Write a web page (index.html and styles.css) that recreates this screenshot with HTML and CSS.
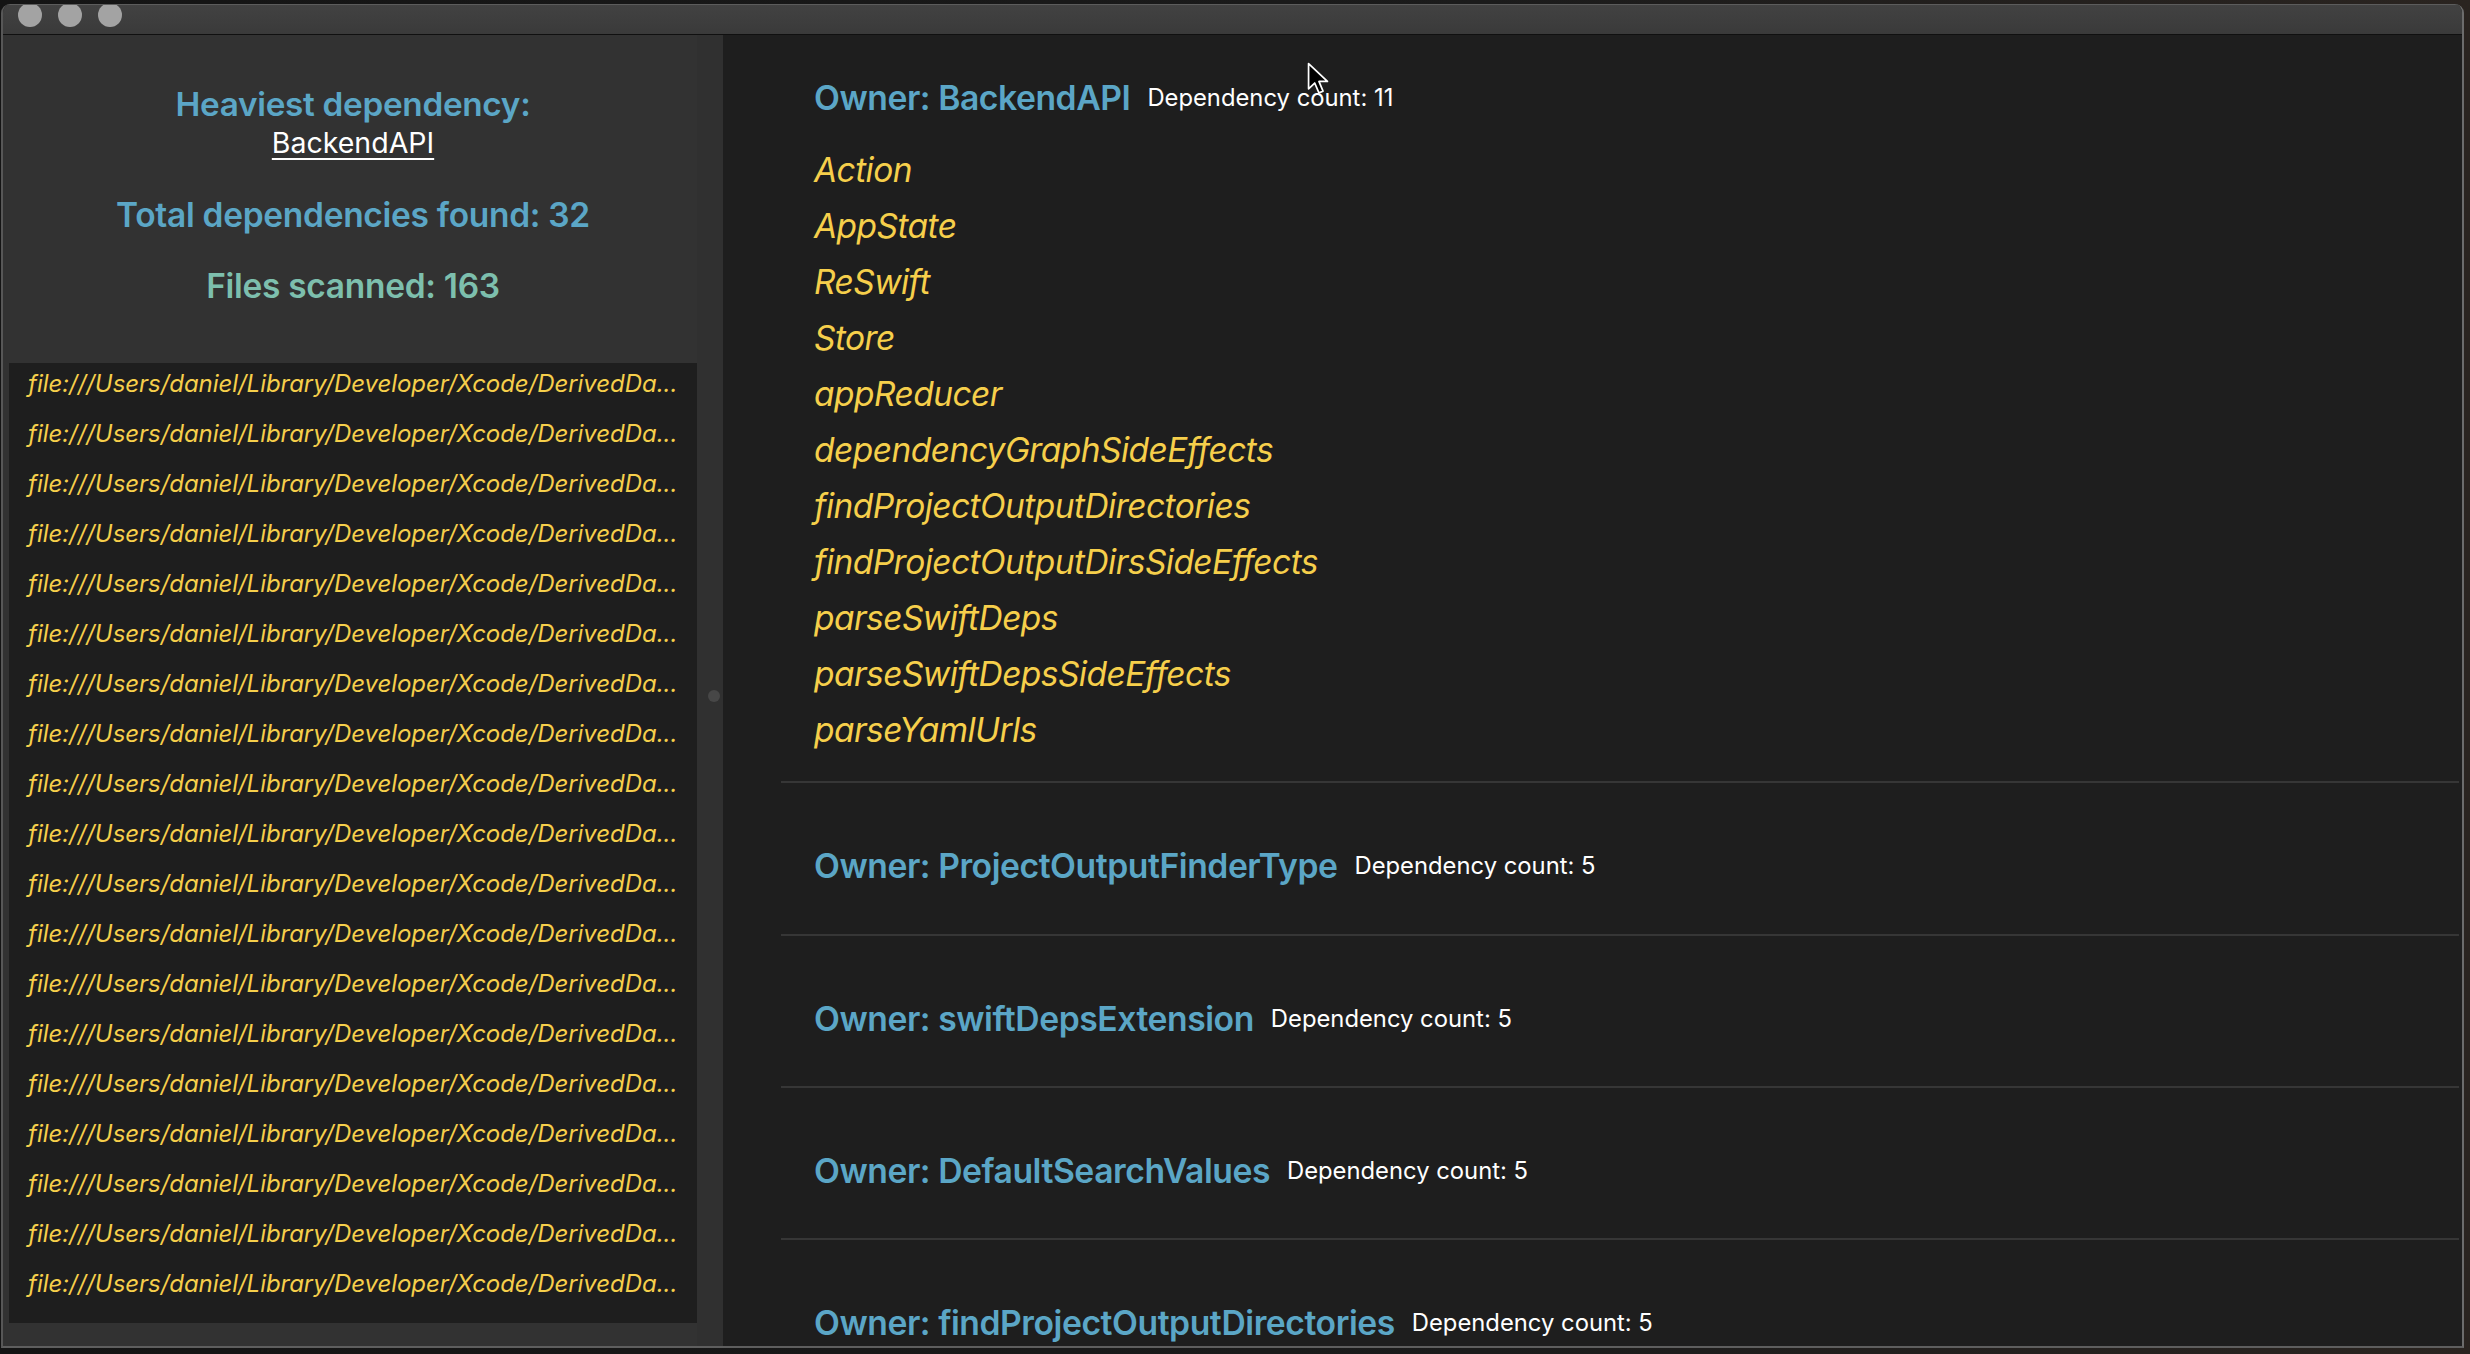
FILE: index.html
```html
<!DOCTYPE html>
<html lang="en">
<head>
<meta charset="utf-8">
<title>Dependency Viewer</title>
<link rel="stylesheet" href="styles.css">
</head>
<body>
<div class="desktop">
  <div class="window">
    <div class="titlebar">
      <span class="light"></span>
      <span class="light"></span>
      <span class="light"></span>
    </div>
    <div class="content">
      <aside class="sidebar">
        <div class="stats">
          <div class="stat-title">Heaviest dependency:</div>
          <div class="stat-link">BackendAPI</div>
          <div class="stat-total">Total dependencies found: 32</div>
          <div class="stat-files">Files scanned: 163</div>
        </div>
        <div class="file-list">
          <div class="file-row">file:///Users/daniel/Library/Developer/Xcode/DerivedDa...</div>
          <div class="file-row">file:///Users/daniel/Library/Developer/Xcode/DerivedDa...</div>
          <div class="file-row">file:///Users/daniel/Library/Developer/Xcode/DerivedDa...</div>
          <div class="file-row">file:///Users/daniel/Library/Developer/Xcode/DerivedDa...</div>
          <div class="file-row">file:///Users/daniel/Library/Developer/Xcode/DerivedDa...</div>
          <div class="file-row">file:///Users/daniel/Library/Developer/Xcode/DerivedDa...</div>
          <div class="file-row">file:///Users/daniel/Library/Developer/Xcode/DerivedDa...</div>
          <div class="file-row">file:///Users/daniel/Library/Developer/Xcode/DerivedDa...</div>
          <div class="file-row">file:///Users/daniel/Library/Developer/Xcode/DerivedDa...</div>
          <div class="file-row">file:///Users/daniel/Library/Developer/Xcode/DerivedDa...</div>
          <div class="file-row">file:///Users/daniel/Library/Developer/Xcode/DerivedDa...</div>
          <div class="file-row">file:///Users/daniel/Library/Developer/Xcode/DerivedDa...</div>
          <div class="file-row">file:///Users/daniel/Library/Developer/Xcode/DerivedDa...</div>
          <div class="file-row">file:///Users/daniel/Library/Developer/Xcode/DerivedDa...</div>
          <div class="file-row">file:///Users/daniel/Library/Developer/Xcode/DerivedDa...</div>
          <div class="file-row">file:///Users/daniel/Library/Developer/Xcode/DerivedDa...</div>
          <div class="file-row">file:///Users/daniel/Library/Developer/Xcode/DerivedDa...</div>
          <div class="file-row">file:///Users/daniel/Library/Developer/Xcode/DerivedDa...</div>
          <div class="file-row">file:///Users/daniel/Library/Developer/Xcode/DerivedDa...</div>
          <div class="file-row file-row-partial">file:///Users/daniel/Library/Developer/Xcode/DerivedDa...</div>
        </div>
      </aside>
      <div class="divider"><span class="handle"></span></div>
      <main class="main">
        <section class="owner">
          <div class="owner-head">
            <span class="owner-name">Owner: BackendAPI</span>
            <span class="owner-count">Dependency count: 11</span>
          </div>
          <ul class="deps">
            <li>Action</li>
            <li>AppState</li>
            <li>ReSwift</li>
            <li>Store</li>
            <li>appReducer</li>
            <li>dependencyGraphSideEffects</li>
            <li>findProjectOutputDirectories</li>
            <li>findProjectOutputDirsSideEffects</li>
            <li>parseSwiftDeps</li>
            <li>parseSwiftDepsSideEffects</li>
            <li>parseYamlUrls</li>
          </ul>
        </section>
        <section class="owner">
          <div class="owner-head">
            <span class="owner-name">Owner: ProjectOutputFinderType</span>
            <span class="owner-count">Dependency count: 5</span>
          </div>
          <ul class="deps"></ul>
        </section>
        <section class="owner">
          <div class="owner-head">
            <span class="owner-name">Owner: swiftDepsExtension</span>
            <span class="owner-count">Dependency count: 5</span>
          </div>
          <ul class="deps"></ul>
        </section>
        <section class="owner">
          <div class="owner-head">
            <span class="owner-name">Owner: DefaultSearchValues</span>
            <span class="owner-count">Dependency count: 5</span>
          </div>
          <ul class="deps"></ul>
        </section>
        <section class="owner">
          <div class="owner-head">
            <span class="owner-name">Owner: findProjectOutputDirectories</span>
            <span class="owner-count">Dependency count: 5</span>
          </div>
          <ul class="deps"></ul>
        </section>
      </main>
    </div>
  </div>
  <svg class="cursor" width="22" height="34" viewBox="-1 -1 14 21.5">
    <path d="M0 0 V16 L3.9 12.3 L6.6 18.6 L9.2 17.5 L6.6 11.3 H12 Z" fill="#000" stroke="#fff" stroke-width="1.1" stroke-linejoin="round"/>
  </svg>
</div>
</body>
</html>
```

FILE: styles.css
```css
* { box-sizing: border-box; }

html, body {
  margin: 0;
  padding: 0;
}

body {
  width: 2470px;
  height: 1354px;
  overflow: hidden;
  background: #121212;
  font-family: Inter, "Noto Sans", "Liberation Sans", sans-serif;
}

.desktop {
  position: relative;
  width: 2470px;
  height: 1354px;
  padding: 4px 0 0 1px;
  background: linear-gradient(90deg, #141414 0%, #1b1b1b 60%, #2a2420 100%);
}

.window {
  width: 2463px;
  height: 1344px;
  display: flex;
  flex-direction: column;
  border-left: 2px solid #575757;
  border-right: 2px solid #6c6c6c;
  border-bottom: 2px solid #5e5e5e;
  border-radius: 9px 9px 0 0;
  overflow: hidden;
  background: #1e1e1e;
}

.titlebar {
  height: 31px;
  flex: none;
  display: flex;
  align-items: flex-start;
  gap: 16px;
  padding-left: 15px;
  background: linear-gradient(#424242, #3a3a3a);
  border-top: 1px solid #5c5c5c;
  border-bottom: 1px solid #101010;
  overflow: hidden;
}

.light {
  width: 24px;
  height: 24px;
  margin-top: -2px;
  border-radius: 50%;
  background: #a3a3a3;
}

.content {
  flex: 1;
  display: flex;
  min-height: 0;
}

/* ---------- Sidebar ---------- */
.sidebar {
  width: 694px;
  flex: none;
  display: flex;
  flex-direction: column;
  padding-left: 6px;
  background: #323232;
}

.stats {
  padding-top: 49px;
  text-align: center;
  font-weight: 600;
  color: #5ba6c6;
}

.stat-title {
  font-size: 33.3px;
  line-height: 40px;
  letter-spacing: -0.3px;
}

.stat-link {
  font-size: 28.5px;
  line-height: 38px;
  font-weight: 400;
  color: #ffffff;
  text-decoration: underline;
  text-decoration-thickness: 2px;
  text-underline-offset: 5px;
}

.stat-total {
  margin-top: 33px;
  font-size: 33.5px;
  line-height: 40px;
  letter-spacing: -0.3px;
}

.stat-files {
  margin-top: 31px;
  font-size: 33.5px;
  line-height: 40px;
  letter-spacing: -0.3px;
  color: #7dbfad;
}

.file-list {
  flex: 1;
  min-height: 0;
  margin: 57px 0 23px;
  background: #1e1e1e;
  overflow: hidden;
}

.file-row {
  height: 50px;
  padding: 3px 12px 11px 19px;
  font-size: 24px;
  line-height: 36px;
  font-style: italic;
  letter-spacing: -0.05px;
  color: #f6cf4b;
  white-space: nowrap;
  overflow: hidden;
}

.file-row-partial {
  color: #6e6a5c;
}

/* ---------- Divider ---------- */
.divider {
  width: 26px;
  flex: none;
  display: flex;
  align-items: center;
  justify-content: flex-end;
  padding: 10px 3px 0 0;
  background: #303030;
}

.handle {
  width: 12px;
  height: 12px;
  border-radius: 50%;
  background: #474747;
}

/* ---------- Main ---------- */
.main {
  flex: 1;
  min-width: 0;
  overflow: hidden;
  background: #1e1e1e;
}

.owner {
  margin: 0 3px 0 58px;
  padding: 63px 0 0 33px;
  border-bottom: 2px solid #363636;
}

.owner:first-child {
  padding-top: 43px;
}

.owner-head {
  height: 40px;
  display: flex;
  align-items: center;
  gap: 17px;
  white-space: nowrap;
}

.owner-name {
  font-size: 33.7px;
  line-height: 40px;
  font-weight: 600;
  letter-spacing: -0.45px;
  color: #5ba6c6;
}

.owner-count {
  font-size: 23.8px;
  line-height: 30px;
  font-weight: 400;
  color: #ffffff;
}

.deps {
  list-style: none;
  margin: 0;
  padding: 24px 0 23.3px;
}

.deps li {
  font-size: 33.5px;
  line-height: 56px;
  font-style: italic;
  letter-spacing: -0.55px;
  color: #f6cf4b;
}

.cursor {
  position: absolute;
  left: 1307px;
  top: 62px;
}
```
